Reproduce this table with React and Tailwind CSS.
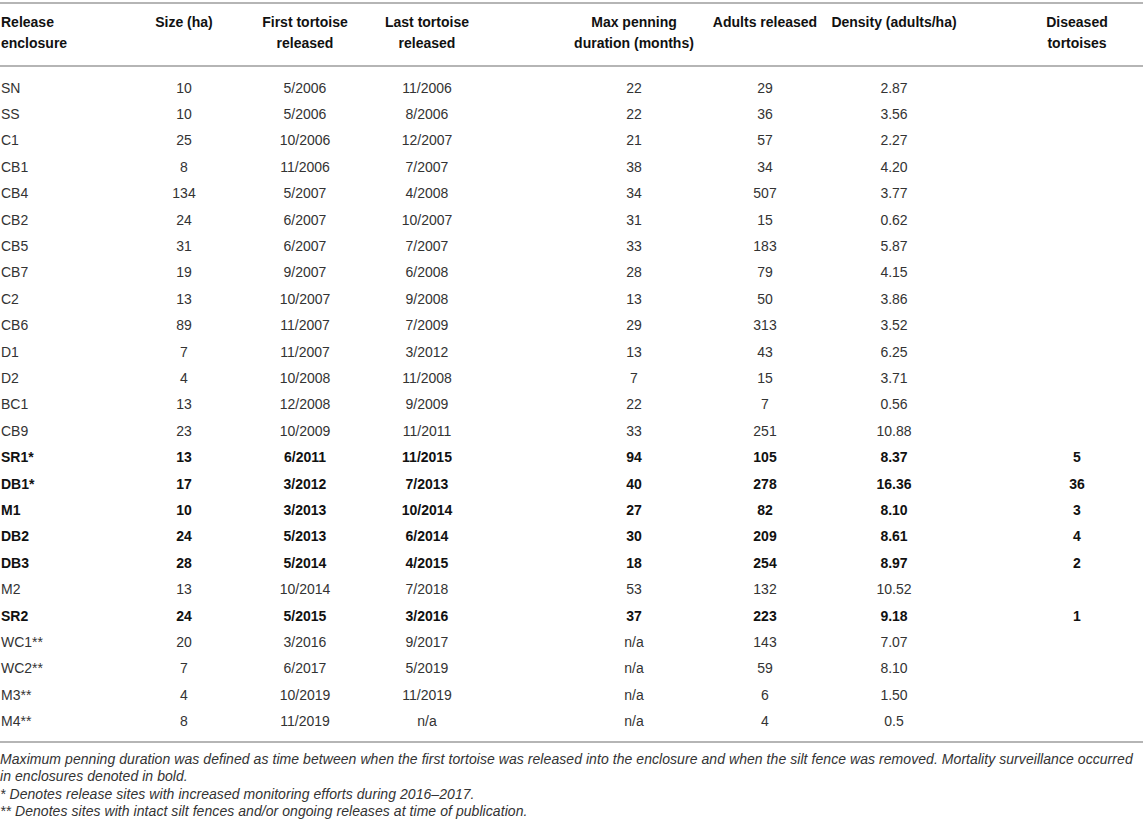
import React from "react";

const rows = [
  ["SN", "10", "5/2006", "11/2006", "22", "29", "2.87", "", false],
  ["SS", "10", "5/2006", "8/2006", "22", "36", "3.56", "", false],
  ["C1", "25", "10/2006", "12/2007", "21", "57", "2.27", "", false],
  ["CB1", "8", "11/2006", "7/2007", "38", "34", "4.20", "", false],
  ["CB4", "134", "5/2007", "4/2008", "34", "507", "3.77", "", false],
  ["CB2", "24", "6/2007", "10/2007", "31", "15", "0.62", "", false],
  ["CB5", "31", "6/2007", "7/2007", "33", "183", "5.87", "", false],
  ["CB7", "19", "9/2007", "6/2008", "28", "79", "4.15", "", false],
  ["C2", "13", "10/2007", "9/2008", "13", "50", "3.86", "", false],
  ["CB6", "89", "11/2007", "7/2009", "29", "313", "3.52", "", false],
  ["D1", "7", "11/2007", "3/2012", "13", "43", "6.25", "", false],
  ["D2", "4", "10/2008", "11/2008", "7", "15", "3.71", "", false],
  ["BC1", "13", "12/2008", "9/2009", "22", "7", "0.56", "", false],
  ["CB9", "23", "10/2009", "11/2011", "33", "251", "10.88", "", false],
  ["SR1*", "13", "6/2011", "11/2015", "94", "105", "8.37", "5", true],
  ["DB1*", "17", "3/2012", "7/2013", "40", "278", "16.36", "36", true],
  ["M1", "10", "3/2013", "10/2014", "27", "82", "8.10", "3", true],
  ["DB2", "24", "5/2013", "6/2014", "30", "209", "8.61", "4", true],
  ["DB3", "28", "5/2014", "4/2015", "18", "254", "8.97", "2", true],
  ["M2", "13", "10/2014", "7/2018", "53", "132", "10.52", "", false],
  ["SR2", "24", "5/2015", "3/2016", "37", "223", "9.18", "1", true],
  ["WC1**", "20", "3/2016", "9/2017", "n/a", "143", "7.07", "", false],
  ["WC2**", "7", "6/2017", "5/2019", "n/a", "59", "8.10", "", false],
  ["M3**", "4", "10/2019", "11/2019", "n/a", "6", "1.50", "", false],
  ["M4**", "8", "11/2019", "n/a", "n/a", "4", "0.5", "", false],
];

const headers = [
  "Release\nenclosure",
  "Size (ha)",
  "First tortoise\nreleased",
  "Last tortoise\nreleased",
  "Max penning\nduration (months)",
  "Adults released",
  "Density (adults/ha)",
  "Diseased\ntortoises",
];

const cellCls = [
  "text-left pl-[1px]",
  "text-center",
  "text-center",
  "text-center",
  "text-center pl-[76px]",
  "text-center",
  "text-center",
  "text-center pl-[53px]",
];

const grid =
  "grid grid-cols-[120px_128px_114px_130px_208px_130px_128px_185px]";

export default function App() {
  return (
    <div className="w-[1143px] h-[830px] bg-white font-['Liberation_Sans',Arial,sans-serif] overflow-hidden">
      <div className="pt-[2px]">
        <div className="border-t-2 border-[#b5b5b5]" />
        <div className={`${grid} pt-[8px] pb-[11px] text-[14px] leading-[21px] font-bold text-[#111]`}>
          {headers.map((h, i) => (
            <div key={i} className={`${cellCls[i]} whitespace-pre`}>
              {h}
            </div>
          ))}
        </div>
        <div className="border-t-2 border-[#b5b5b5]" />
        <div className="pt-[8px] pb-[6px]">
          {rows.map((r, ri) => (
            <div
              key={ri}
              className={`${grid} h-[26.4px] items-center text-[14px] ${
                r[8] ? "font-bold text-[#111]" : "font-normal text-[#333]"
              }`}
            >
              {r.slice(0, 8).map((c, ci) => (
                <div key={ci} className={`${cellCls[ci]} whitespace-nowrap`}>
                  {c}
                </div>
              ))}
            </div>
          ))}
        </div>
        <div className="border-t-2 border-[#b5b5b5]" />
        <div className="pt-[8px] text-[14px] tracking-[0.06px] italic text-[#333] leading-[17.5px]">
          <p>
            Maximum penning duration was defined as time between when the first tortoise was released into the enclosure and when the silt fence was removed. Mortality surveillance occurred in enclosures denoted in bold.
          </p>
          <p>* Denotes release sites with increased monitoring efforts during 2016–2017.</p>
          <p>** Denotes sites with intact silt fences and/or ongoing releases at time of publication.</p>
        </div>
      </div>
    </div>
  );
}
